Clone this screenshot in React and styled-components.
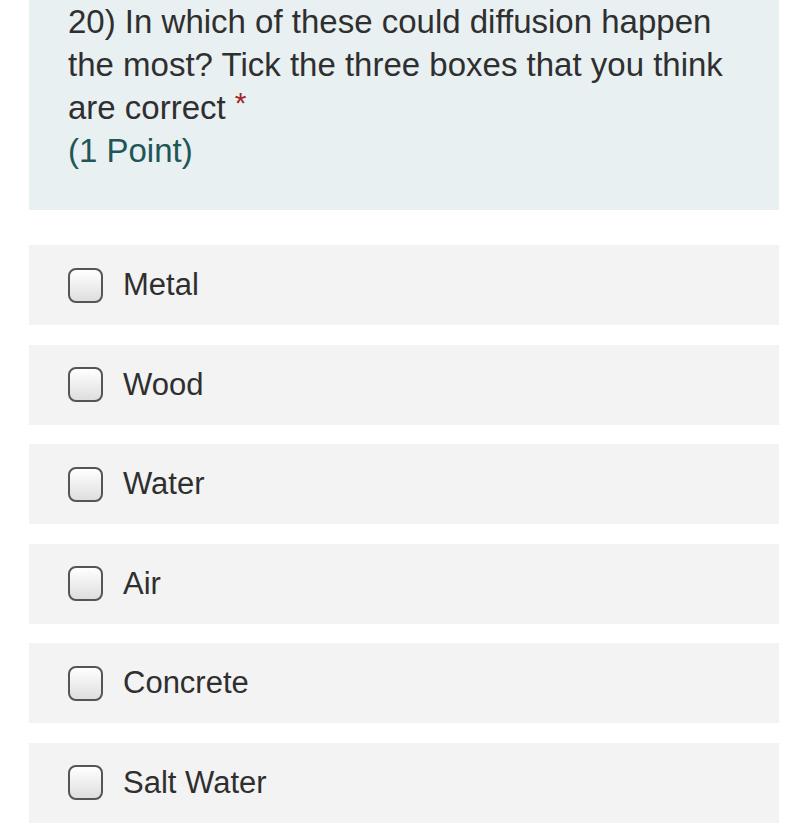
import React from "react";
import styled, { createGlobalStyle } from "styled-components";

const Global = createGlobalStyle`
  html, body { margin: 0; padding: 0; background: #ffffff; }
  body { font-family: "Liberation Sans", Arial, Helvetica, sans-serif; }
`;

const Page = styled.div`
  width: 750px;
  margin-left: 29px;
  display: flex;
  flex-direction: column;
`;

const QuestionPanel = styled.div`
  background: #e9f0f2;
  padding: 0 39px 38px 39px;
  font-size: 33px;
  line-height: 43px;
  color: #2f2f2f;
`;

const Title = styled.div``;

const Required = styled.span`
  color: #a4262c;
  font-size: 30px;
  margin-left: 9px;
  vertical-align: 6px;
  line-height: 1;
`;

const Points = styled.div`
  color: #1f5656;
`;

const Options = styled.div`
  margin-top: 35px;
  display: flex;
  flex-direction: column;
  gap: 19.5px;
`;

const Option = styled.label`
  height: 80px;
  background: #f3f3f3;
  display: flex;
  align-items: center;
  padding-left: 39px;
  gap: 20px;
`;

const Box = styled.span`
  box-sizing: border-box;
  width: 35px;
  height: 35px;
  border: 2px solid #555555;
  border-radius: 8px;
  background: linear-gradient(#ffffff, #dedede);
  flex: none;
`;

const Label = styled.span`
  font-size: 31px;
  color: #2f2f2f;
`;

const options = ["Metal", "Wood", "Water", "Air", "Concrete", "Salt Water"];

export default function App() {
  return (
    <>
      <Global />
      <Page>
        <QuestionPanel>
          <Title>
            20) In which of these could diffusion happen the most? Tick the three boxes that you think are correct
            <Required>*</Required>
          </Title>
          <Points>(1 Point)</Points>
        </QuestionPanel>
        <Options>
          {options.map((o) => (
            <Option key={o}>
              <Box />
              <Label>{o}</Label>
            </Option>
          ))}
        </Options>
      </Page>
    </>
  );
}
